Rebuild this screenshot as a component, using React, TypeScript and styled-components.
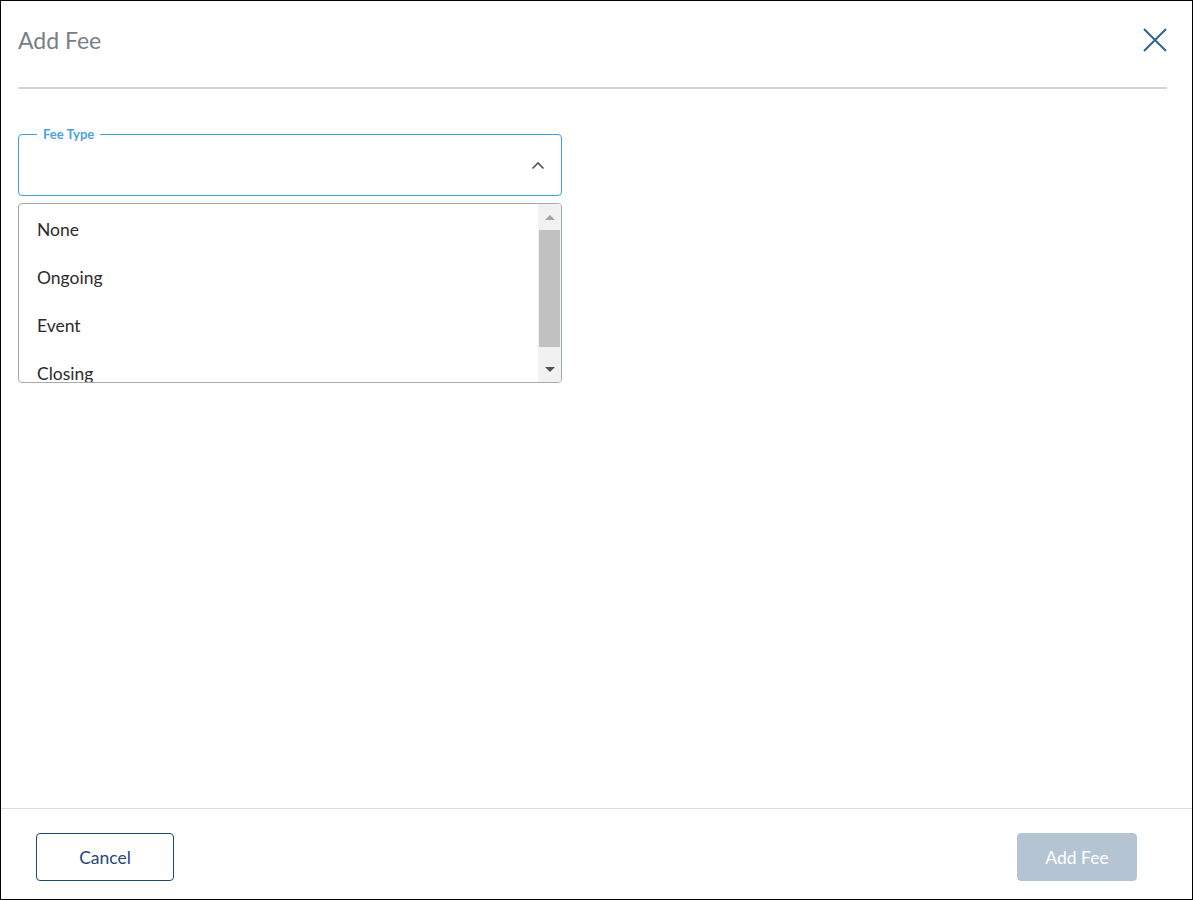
import styled, { createGlobalStyle } from 'styled-components';

const GlobalStyle = createGlobalStyle`
  html, body {
    margin: 0;
    padding: 0;
    background: #ffffff;
  }
  body {
    font-family: Lato, "Liberation Sans", sans-serif;
  }
`;

const Dialog = styled.div`
  width: 1193px;
  height: 900px;
  box-sizing: border-box;
  border: 1px solid #000;
  display: flex;
  flex-direction: column;
  background: #fff;
`;

const Header = styled.header`
  height: 78px;
  display: flex;
  align-items: center;
  justify-content: space-between;
  padding: 0 25px 0 17px;
`;

const Title = styled.h2`
  margin: 0;
  font-size: 23px;
  font-weight: 400;
  color: #787f87;
`;

const CloseButton = styled.button`
  width: 24px;
  height: 24px;
  padding: 0;
  border: none;
  background: none;
  cursor: pointer;
  display: flex;
`;

const Divider = styled.div`
  height: 2px;
  margin: 8px 25px 0 17px;
  background: #d5d5d5;
`;

const Body = styled.main`
  flex: 1;
  padding: 45px 17px 0;
`;

const Field = styled.div`
  position: relative;
  width: 544px;
  height: 62px;
  box-sizing: border-box;
  border: 1px solid #3aa1da;
  border-radius: 4px;
  display: flex;
  align-items: center;
  justify-content: flex-end;
  padding-right: 16px;
`;

const FieldLabel = styled.span`
  position: absolute;
  top: -8px;
  left: 18px;
  padding: 0 6px;
  background: #fff;
  font-size: 13px;
  line-height: 14px;
  font-weight: 700;
  color: #4aa3df;
`;

const List = styled.div`
  margin-top: 7px;
  width: 544px;
  height: 180px;
  box-sizing: border-box;
  border: 1px solid #a2abb3;
  border-radius: 4px;
  display: flex;
  overflow: hidden;
`;

const Options = styled.ul`
  flex: 1;
  list-style: none;
  margin: 0;
  padding: 1px 0 0;
  overflow: hidden;
`;

const Option = styled.li`
  height: 48px;
  padding: 0 18px;
  display: flex;
  align-items: center;
  font-size: 17.5px;
  color: #2b2b2b;
`;

const Scrollbar = styled.div`
  width: 23px;
  background: #f1f1f1;
  display: flex;
  flex-direction: column;
`;

const ScrollArrow = styled.div<{ $dir: 'up' | 'down' }>`
  height: 26px;
  display: flex;
  align-items: center;
  justify-content: center;

  &::before {
    content: '';
    width: 0;
    height: 0;
    border-left: 5px solid transparent;
    border-right: 5px solid transparent;
    ${({ $dir }) =>
      $dir === 'up'
        ? 'border-bottom: 5px solid #a3a3a3;'
        : 'border-top: 5px solid #505050;'}
  }
`;

const Track = styled.div`
  flex: 1;
  padding: 0 1px;
`;

const Thumb = styled.div`
  height: 117px;
  background: #c1c1c1;
`;

const Footer = styled.footer`
  height: 91px;
  box-sizing: border-box;
  border-top: 1px solid #dcdcdc;
  display: flex;
  justify-content: space-between;
  align-items: flex-start;
  padding: 24px 55px 0 35px;
`;

const Button = styled.button<{ $primary?: boolean }>`
  height: 48px;
  width: ${({ $primary }) => ($primary ? '120px' : '138px')};
  border-radius: 4px;
  font-family: Lato, "Liberation Sans", sans-serif;
  font-size: 17.5px;
  cursor: pointer;
  border: 1px solid ${({ $primary }) => ($primary ? '#b4c4d2' : '#1e4a78')};
  background: ${({ $primary }) => ($primary ? '#b4c4d2' : '#fff')};
  color: ${({ $primary }) => ($primary ? '#fff' : '#1e4a78')};
`;

const options = ['None', 'Ongoing', 'Event', 'Closing'];

const App = () => {
  return (
    <>
      <GlobalStyle />
      <Dialog>
        <Header>
          <Title>Add Fee</Title>
          <CloseButton aria-label="Close">
            <svg width="24" height="24" viewBox="0 0 24 24">
              <path d="M1 1 L23 23 M23 1 L1 23" stroke="#2f6395" strokeWidth="2" fill="none" />
            </svg>
          </CloseButton>
        </Header>
        <Divider />
        <Body>
          <Field>
            <FieldLabel>Fee Type</FieldLabel>
            <svg width="14" height="9" viewBox="0 0 14 9">
              <path d="M1.5 7.5 L7 2 L12.5 7.5" stroke="#555" strokeWidth="1.6" fill="none" />
            </svg>
          </Field>
          <List>
            <Options>
              {options.map((o) => (
                <Option key={o}>{o}</Option>
              ))}
            </Options>
            <Scrollbar>
              <ScrollArrow $dir="up" />
              <Track>
                <Thumb />
              </Track>
              <ScrollArrow $dir="down" />
            </Scrollbar>
          </List>
        </Body>
        <Footer>
          <Button>Cancel</Button>
          <Button $primary>Add Fee</Button>
        </Footer>
      </Dialog>
    </>
  );
};

export default App;
